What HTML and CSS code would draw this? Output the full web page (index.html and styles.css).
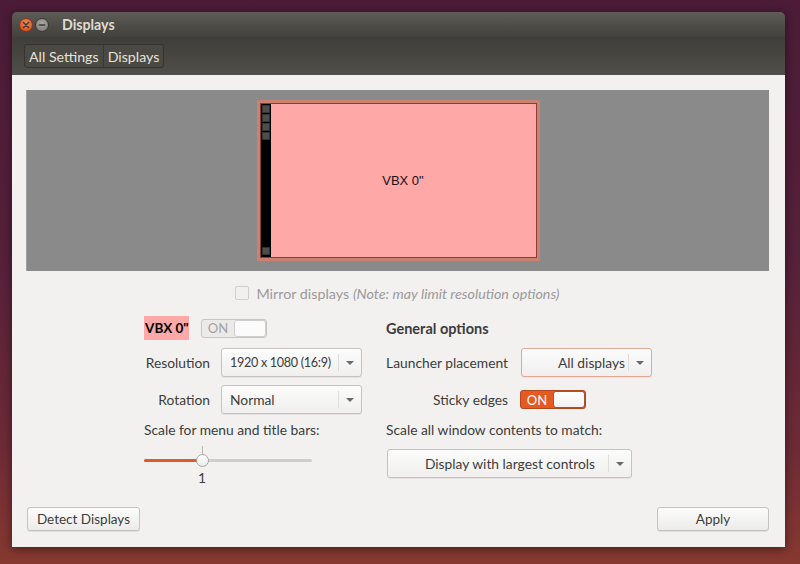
FILE: index.html
```html
<!DOCTYPE html>
<html>
<head>
<meta charset="utf-8">
<link rel="stylesheet" href="styles.css">
</head>
<body>
<div class="window">
  <div class="titlebar">
    <span class="wbtn close"><svg width="8" height="8" viewBox="0 0 8 8"><path d="M1.5 1.5L6.5 6.5M6.5 1.5L1.5 6.5" stroke="#3c3b37" stroke-width="1.5" stroke-linecap="round"/></svg></span>
    <span class="wbtn min"><svg width="8" height="8" viewBox="0 0 8 8"><path d="M1.5 4H6.5" stroke="#3c3b37" stroke-width="1.5" stroke-linecap="round"/></svg></span>
    <span class="title">Displays</span>
  </div>
  <div class="toolbar">
    <div class="crumbs"><span class="crumb">All Settings</span><span class="crumb">Displays</span></div>
  </div>
  <div class="content">
    <div class="preview">
      <div class="monitor">
        <div class="launcher"><i></i><i></i><i></i><i></i><span class="fill"></span><i></i></div>
        <div class="screen">VBX 0"</div>
      </div>
    </div>
    <div class="mirror"><span class="checkbox"></span><span>Mirror displays <em>(Note: may limit resolution options)</em></span></div>
    <div class="options">
      <div class="col left">
        <div class="row1 span"><span class="dispname">VBX 0"</span><span class="toggle off"><span class="on">ON</span><span class="knob"></span></span></div>
        <span class="label">Resolution</span>
        <div class="combo"><span class="ctext tight">1920 x 1080 (16:9)</span><span class="arrow"></span></div>
        <span class="label">Rotation</span>
        <div class="combo"><span class="ctext">Normal</span><span class="arrow"></span></div>
        <span class="span plain">Scale for menu and title bars:</span>
        <div class="span slider-wrap">
          <div class="slider"><div class="fill-bar"></div><div class="tick"></div><div class="thumb"></div></div>
          <div class="value">1</div>
        </div>
      </div>
      <div class="col right">
        <div class="span heading">General options</div>
        <span class="label">Launcher placement</span>
        <div class="combo focus"><span class="ctext end">All displays</span><span class="arrow"></span></div>
        <span class="label">Sticky edges</span>
        <div class="tcell"><span class="toggle active"><span class="on">ON</span><span class="knob"></span></span></div>
        <span class="span plain">Scale all window contents to match:</span>
        <div class="span top"><div class="combo wide"><span class="ctext end2">Display with largest controls</span><span class="arrow"></span></div></div>
      </div>
    </div>
    <div class="grow"></div>
    <div class="buttons"><span class="btn detect">Detect Displays</span><span class="btn apply">Apply</span></div>
  </div>
</div>
</body>
</html>
```
FILE: styles.css
```css
* { box-sizing: border-box; }
html, body { margin: 0; padding: 0; }
body {
  width: 800px; height: 564px; overflow: hidden;
  font-family: Lato, "Liberation Sans", sans-serif;
  font-size: 13.8px;
  background: linear-gradient(180deg, #4b1b37 0%, #55203a 45%, #6e2b36 80%, #86392f 100%);
  padding: 12px 15px 0 12px;
}
.window {
  width: 773px; height: 535px;
  display: flex; flex-direction: column;
  border-radius: 5px 5px 0 0;
  overflow: hidden;
  box-shadow: 0 2px 10px rgba(0,0,0,0.45);
}
.titlebar {
  height: 25px; flex: none;
  display: flex; align-items: center;
  padding-left: 7px;
  background: linear-gradient(180deg, #5d5c56 0%, #4c4b46 60%, #43423d 100%);
}
.wbtn {
  width: 14px; height: 14px; border-radius: 50%;
  display: flex; align-items: center; justify-content: center;
  margin-right: 2px;
}
.close { background: radial-gradient(circle at 50% 35%, #f58a5e, #e2571f 70%, #c2431a); border: 1px solid #8a3a1c; }
.min { background: radial-gradient(circle at 50% 35%, #a9a8a2, #85847e 70%, #6f6e69); border: 1px solid #3a3935; }
.title { color: #dfdbd2; font-weight: bold; margin-left: 11px; font-size: 14.2px; }
.toolbar {
  height: 38px; flex: none;
  display: flex; align-items: center;
  padding-left: 12px;
  background: linear-gradient(180deg, #3f3e3a 0%, #45443f 40%, #504f49 100%);
}
.crumbs { display: flex; height: 24px; border: 1px solid #35342f; border-radius: 3px; background: #4a4944; }
.crumb { color: #e6e2da; padding: 0 4px; display: flex; align-items: center; font-size: 14.2px; }
.crumb + .crumb { border-left: 1px solid #393833; }
.content {
  flex: 1;
  background: #f2f1f0;
  display: flex; flex-direction: column;
  padding: 15px 16px 16px 14px;
}
.preview {
  height: 181px; flex: none;
  background: #8a8a8a;
  display: flex; align-items: center; justify-content: center;
  border-left: 1px solid #a0a0a0;
}
.monitor {
  width: 283px; height: 161px;
  border: 3px solid #c9826f;
  display: flex;
  background: #ffa8a8;
  box-shadow: inset 0 0 0 1px #8b3c36;
}
.launcher {
  width: 10px; background: #000; margin: 1px 0 1px 1px;
  display: flex; flex-direction: column; align-items: center; padding: 1px 0;
}
.launcher i { display: block; width: 8px; height: 8px; background: #4d4d4d; border: 1px solid #333; margin-bottom: 1px; }
.launcher .fill { flex: 1; }
.screen {
  flex: 1; display: flex; align-items: center; justify-content: center;
  font-family: "Liberation Sans", Arial, sans-serif; font-size: 13px; color: #1a1010;
  margin: 1px 1px 1px 0;
}
.mirror {
  margin-top: 13px; height: 18px;
  display: flex; align-items: center; justify-content: center; gap: 7px;
  color: #9b9a98; font-size: 14.3px;
}
.mirror em { font-style: italic; }
.checkbox { width: 14px; height: 14px; border: 1px solid #cfcecc; border-radius: 2px; background: #f1f0ef; }
.options {
  margin-top: 14px;
  display: flex; justify-content: center; gap: 24px;
  padding-left: 1px;
}
.col {
  display: grid;
  grid-template-rows: 24px 29px 29px 14px auto;
  row-gap: 8px;
  align-items: center;
  white-space: nowrap;
}
.left { grid-template-columns: 66px 141px; column-gap: 11px; }
.right { grid-template-columns: 122px 132px; column-gap: 12px; }
.span { grid-column: 1 / 3; }
.label { text-align: right; color: #3c3c3c; }
.plain { color: #3c3c3c; }
.heading { font-weight: bold; color: #3c3c3c; font-size: 14.5px; }
.row1 { display: flex; align-items: center; gap: 12px; height: 24px; }
.dispname { background: #ffa8a8; font-weight: bold; color: #000; height: 24px; width: 45px; display: flex; align-items: center; padding-left: 1px; font-size: 13.5px; }
.toggle {
  width: 66px; height: 19px; border-radius: 3px;
  display: flex; overflow: hidden;
  border: 1px solid #c6c5c3;
}
.toggle .on { width: 32px; display: flex; align-items: center; justify-content: center; font-size: 13px; }
.toggle .knob { flex: 1; background: linear-gradient(180deg, #ffffff, #f1f1f1); border-left: 1px solid #c0bfbd; border-radius: 3px; }
.toggle.off { background: #ebeae9; }
.toggle.off .on { color: #a3a2a0; }
.toggle.off .knob { background: #fbfbfb; border: 1px solid #cfcecc; }
.toggle.active { background: #e55a20; border-color: #b4471b; }
.toggle.active .on { color: #fff; }
.toggle.active .knob { border: 1px solid #a7532f; }
.tcell { display: flex; align-items: center; }
.combo {
  height: 29px; display: flex; align-items: center;
  border: 1px solid #c4c3c1; border-radius: 3px;
  background: linear-gradient(180deg, #fcfcfc, #f0efee);
  box-shadow: 0 1px 0 rgba(0,0,0,0.06);
  color: #3c3c3c; font-size: 13.8px;
}
.combo .ctext { flex: 1; padding-left: 8px; border-right: 1px solid #dedddb; height: 17px; display: flex; align-items: center; overflow: visible; }
.combo .ctext.tight { font-size: 12.6px; letter-spacing: -0.3px; }
.combo .ctext.end { justify-content: flex-end; padding-right: 3px; }
.combo .ctext.end2 { justify-content: flex-end; padding-right: 13px; }
.combo .arrow { width: 22px; height: 100%; position: relative; flex: none; }
.combo .arrow::after {
  content: ""; position: absolute; left: 7px; top: 12px;
  border-left: 4px solid transparent; border-right: 4px solid transparent; border-top: 4px solid #6a6a6a;
}
.combo.focus { border-color: #e0a996; margin-left: 1px; }
.top { align-self: start; }
.combo.wide { width: 245px; margin-left: 1px; margin-top: 5px; }
.slider-wrap { display: flex; flex-direction: column; padding-top: 2px; align-self: start; }
.slider { width: 168px; height: 22px; position: relative; }
.slider::before { content: ""; position: absolute; left: 0; right: 0; top: 13px; height: 3px; background: #cfcecc; border-radius: 2px; }
.fill-bar { position: absolute; left: 0; width: 58px; top: 13px; height: 3px; background: #dd5a2a; border-radius: 2px; }
.tick { position: absolute; left: 58px; top: 0; width: 1px; height: 10px; background: #b8b7b5; }
.thumb { position: absolute; left: 52px; top: 8px; width: 13px; height: 13px; border-radius: 50%; background: linear-gradient(180deg, #ffffff, #ececec); border: 1px solid #a9a8a6; }
.value { width: 116px; text-align: center; color: #3c3c3c; margin-top: 1px; }
.grow { flex: 1; }
.buttons { display: flex; justify-content: space-between; align-items: flex-end; padding-left: 1px; }
.btn {
  height: 24px; display: flex; align-items: center; justify-content: center;
  border: 1px solid #c4c3c1; border-radius: 3px;
  background: linear-gradient(180deg, #fcfcfc, #ecebea);
  box-shadow: 0 1px 0 rgba(0,0,0,0.08);
  color: #3c3c3c; font-size: 13.5px;
}
.detect { width: 113px; }
.apply { width: 112px; }
```
